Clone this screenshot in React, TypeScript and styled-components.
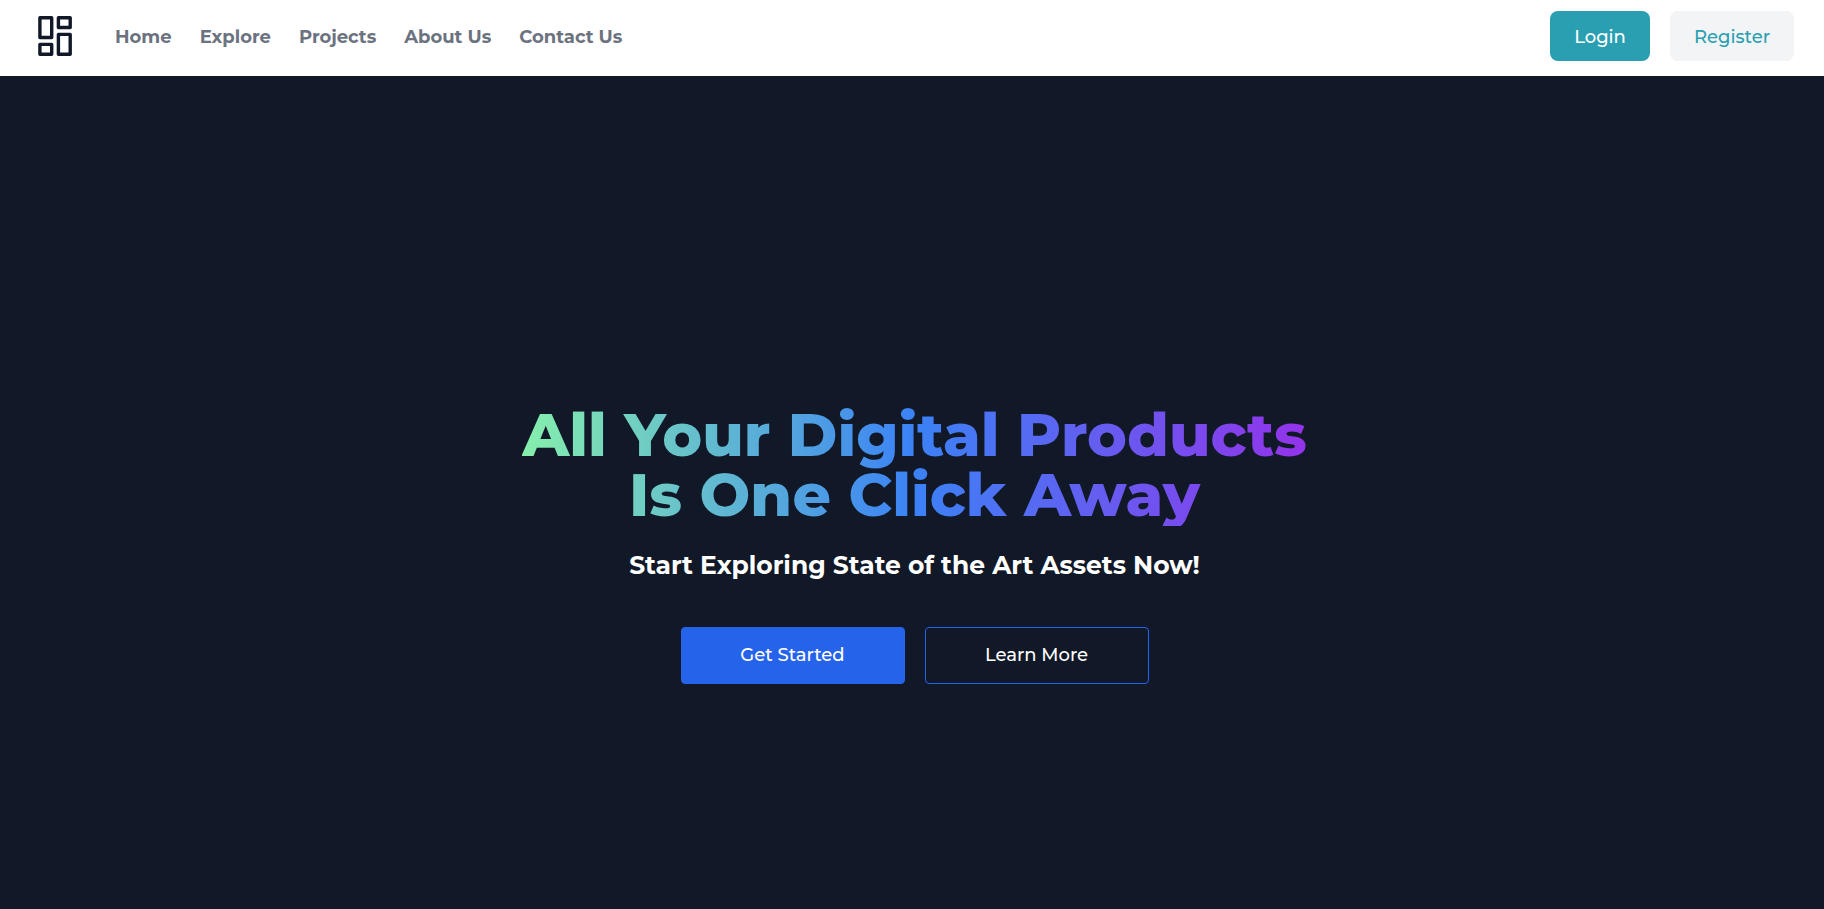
import React from "react";
import styled, { createGlobalStyle, css } from "styled-components";

const GlobalStyle = createGlobalStyle`
  *, *::before, *::after { box-sizing: border-box; }
  body {
    margin: 0;
    background: #111827;
    font-family: Montserrat, Inter, "Liberation Sans", sans-serif;
    font-size: 18px;
    line-height: 28px;
  }
`;

const Page = styled.div`
  display: flex;
  flex-direction: column;
  min-height: 100vh;
`;

const Header = styled.header`
  display: flex;
  align-items: center;
  justify-content: space-between;
  height: 76px;
  padding: 0 30px 4px 38px;
  background: #fff;
`;

const HeaderGroup = styled.div`
  display: flex;
  align-items: center;
  gap: 43px;
`;

const LogoLink = styled.a`
  display: flex;
  color: #111827;
`;

const NavList = styled.ul`
  display: flex;
  gap: 28px;
  margin: 0;
  padding: 2px 0 0;
  list-style: none;
`;

const NavLink = styled.a`
  color: #6b7280;
  font-weight: 700;
  text-decoration: none;
  white-space: nowrap;
`;

const Actions = styled.div`
  display: flex;
  gap: 20px;
`;

const AccountButton = styled.button<{ $filled?: boolean; $width: number }>`
  width: ${({ $width }) => $width}px;
  height: 50px;
  padding: 2px 0 0;
  border: 0;
  border-radius: 8px;
  font: inherit;
  font-weight: 500;
  cursor: pointer;
  ${({ $filled }) =>
    $filled
      ? css`
          background: #2a9fb2;
          color: #fff;
        `
      : css`
          background: #f3f4f6;
          color: #2a9fb2;
        `}
`;

const Hero = styled.main`
  flex: 1;
  display: flex;
  flex-direction: column;
  align-items: center;
  justify-content: center;
  padding: 104px 16px 0 21px;
  text-align: center;
  color: #fff;
`;

const Title = styled.h1`
  margin: 0;
  padding-bottom: 1px;
  font-size: 60px;
  line-height: 60px;
  font-weight: 800;
  background: linear-gradient(to right, #86efac, #3b82f6, #9333ea);
  background-clip: text;
  -webkit-background-clip: text;
  color: transparent;
`;

const Subtitle = styled.p`
  margin: 19px 0 42px;
  font-size: 25px;
  line-height: 40px;
  font-weight: 700;
`;

const HeroButtons = styled.div`
  display: flex;
  flex-wrap: wrap;
  justify-content: center;
  gap: 20px;
`;

const HeroButton = styled.button<{ $filled?: boolean }>`
  width: 224px;
  height: 57px;
  padding: 0 0 1px;
  border: 1px solid #2563eb;
  border-radius: 4px;
  background: ${({ $filled }) => ($filled ? "#2563eb" : "transparent")};
  color: #fff;
  font: inherit;
  font-weight: 500;
  cursor: pointer;
`;

const links = ["Home", "Explore", "Projects", "About Us", "Contact Us"];

const Logo = () => (
  <svg
    width="34"
    height="40"
    viewBox="0 0 34 40"
    fill="none"
    stroke="currentColor"
    strokeWidth="3.4"
    strokeLinejoin="round"
    aria-hidden="true"
  >
    <rect x="1.9" y="1.7" width="11.8" height="19.8" />
    <rect x="20.4" y="1.7" width="11.8" height="9.8" />
    <rect x="1.9" y="28.4" width="11.8" height="9.8" />
    <rect x="20.4" y="18.4" width="11.8" height="19.8" />
  </svg>
);

export default function App() {
  return (
    <Page>
      <GlobalStyle />
      <Header>
        <HeaderGroup>
          <LogoLink href="#" aria-label="Dashboard">
            <Logo />
          </LogoLink>
          <nav>
            <NavList>
              {links.map((label) => (
                <li key={label}>
                  <NavLink href="#">{label}</NavLink>
                </li>
              ))}
            </NavList>
          </nav>
        </HeaderGroup>
        <Actions>
          <AccountButton type="button" $filled $width={100}>
            Login
          </AccountButton>
          <AccountButton type="button" $width={124}>
            Register
          </AccountButton>
        </Actions>
      </Header>
      <Hero>
        <Title>
          All Your Digital Products
          <br />
          Is One Click Away
        </Title>
        <Subtitle>Start Exploring State of the Art Assets Now!</Subtitle>
        <HeroButtons>
          <HeroButton type="button" $filled>
            Get Started
          </HeroButton>
          <HeroButton type="button">Learn More</HeroButton>
        </HeroButtons>
      </Hero>
    </Page>
  );
}
